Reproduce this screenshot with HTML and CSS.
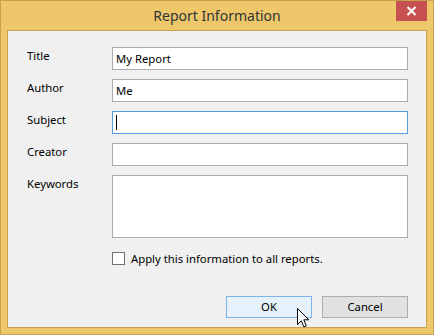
FILE: index.html
```html
<!DOCTYPE html>
<html>
<head>
<meta charset="utf-8">
<link rel="stylesheet" href="styles.css">
</head>
<body>
<div class="window">
  <div class="titlebar">
    <div class="title">Report Information</div>
    <div class="close">
      <svg width="11" height="10" viewBox="0 0 11 10"><path d="M1.5 1 L9.5 9 M9.5 1 L1.5 9" stroke="#fff" stroke-width="2" fill="none"/></svg>
    </div>
  </div>
  <div class="panel">
    <div class="form">
      <div class="label">Title</div>
      <div class="field">My Report</div>
      <div class="label">Author</div>
      <div class="field">Me</div>
      <div class="label">Subject</div>
      <div class="field focus"><span class="caret"></span></div>
      <div class="label">Creator</div>
      <div class="field"></div>
      <div class="label">Keywords</div>
      <div class="field area"></div>
    </div>
    <div class="check-row">
      <span class="checkbox"></span>
      <span class="check-text">Apply this information to all reports.</span>
    </div>
    <div class="buttons">
      <div class="btn default">OK
        <svg class="cursor" width="14" height="21" viewBox="0 0 14 21"><path d="M0.5 0.5 L0.5 16.5 L4.3 12.8 L6.8 18.8 L9.3 17.8 L6.8 11.8 L11.8 11.8 Z" fill="#fff" stroke="#000" stroke-width="1" stroke-linejoin="miter"/></svg>
      </div>
      <div class="btn">Cancel</div>
    </div>
  </div>
</div>
</body>
</html>
```
FILE: styles.css
```css
html, body {
  margin: 0;
  padding: 0;
}
body {
  width: 434px;
  height: 335px;
  overflow: hidden;
  font-family: "Noto Sans", "Open Sans", sans-serif;
  font-size: 11.3px;
  color: #000;
}
.window {
  width: 434px;
  height: 335px;
  box-sizing: border-box;
  border: 1px solid #c4a24e;
  background: #efc76b;
  padding: 0 6px 6px 6px;
  display: flex;
  flex-direction: column;
}
.titlebar {
  height: 29px;
  flex: none;
  display: grid;
  grid-template-columns: 1fr auto 1fr;
}
.title {
  grid-column: 2;
  font-size: 14px;
  line-height: 30px;
  color: #2e3436;
}
.close {
  grid-column: 3;
  justify-self: end;
  align-self: start;
  width: 31px;
  height: 20px;
  background: #c75050;
  display: flex;
  align-items: center;
  justify-content: center;
}
.panel {
  flex: 1;
  border: 1px solid #c9a24f;
  background: #f0f0f0;
  padding: 16px 18px 9px 19px;
  display: flex;
  flex-direction: column;
}
.form {
  display: grid;
  grid-template-columns: 85px 296px;
  row-gap: 9px;
}
.label {
  line-height: 17px;
}
.field {
  box-sizing: border-box;
  height: 23px;
  border: 1px solid #ababab;
  background: #fff;
  padding: 0 3px;
  line-height: 21px;
  display: flex;
  align-items: center;
}
.field.focus {
  border-color: #569de5;
}
.field.area {
  height: 63px;
}
.caret {
  width: 1px;
  height: 15px;
  background: #000;
}
.check-row {
  margin-top: 14px;
  margin-left: 85px;
  display: flex;
  align-items: center;
  gap: 6px;
  height: 13px;
}
.checkbox {
  box-sizing: border-box;
  width: 13px;
  height: 13px;
  border: 1px solid #707070;
  background: #fff;
}
.buttons {
  margin-top: auto;
  display: flex;
  justify-content: flex-end;
  gap: 10px;
}
.btn {
  position: relative;
  box-sizing: border-box;
  width: 86px;
  height: 22px;
  border: 1px solid #adadad;
  background: #e1e1e1;
  text-align: center;
  line-height: 20px;
}
.btn.default {
  border-color: #7eb4ea;
  background: #e5f1fb;
}
.cursor {
  position: absolute;
  left: 70px;
  top: 11px;
}
```
